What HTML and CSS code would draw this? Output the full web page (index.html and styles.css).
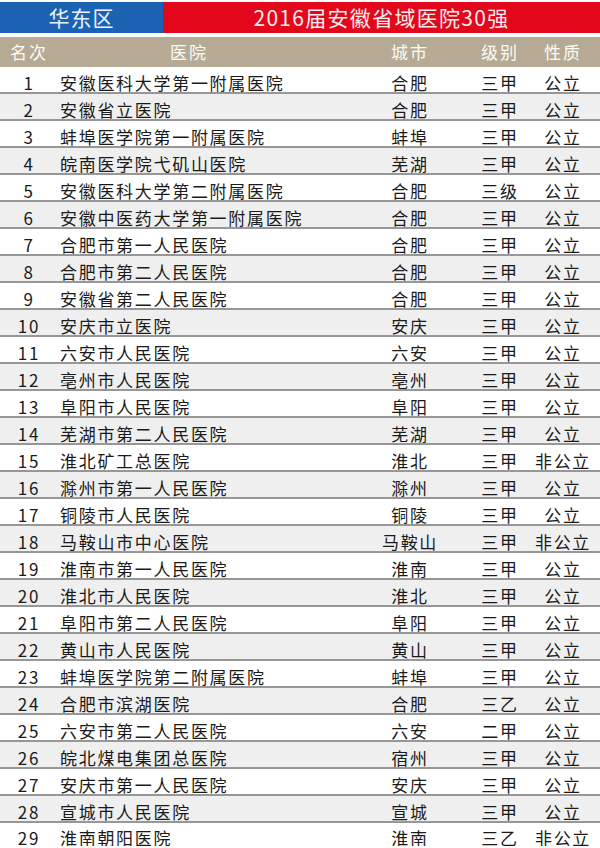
FILE: index.html
```html
<!DOCTYPE html>
<html lang="zh">
<head>
<meta charset="utf-8">
<title>2016届安徽省域医院30强</title>
<link rel="stylesheet" href="styles.css">
</head>
<body>
<div class="page">
  <div class="title">
    <div class="region">华东区</div>
    <div class="heading">2016届安徽省域医院30强</div>
  </div>
  <div class="row head">
    <div class="c rank">名次</div>
    <div class="c name hname">医院</div>
    <div class="c city">城市</div>
    <div class="c level">级别</div>
    <div class="c kind">性质</div>
  </div>
  <div class="row"><div class="c rank">1</div><div class="c name">安徽医科大学第一附属医院</div><div class="c city">合肥</div><div class="c level">三甲</div><div class="c kind">公立</div></div>
  <div class="row"><div class="c rank">2</div><div class="c name">安徽省立医院</div><div class="c city">合肥</div><div class="c level">三甲</div><div class="c kind">公立</div></div>
  <div class="row"><div class="c rank">3</div><div class="c name">蚌埠医学院第一附属医院</div><div class="c city">蚌埠</div><div class="c level">三甲</div><div class="c kind">公立</div></div>
  <div class="row"><div class="c rank">4</div><div class="c name">皖南医学院弋矶山医院</div><div class="c city">芜湖</div><div class="c level">三甲</div><div class="c kind">公立</div></div>
  <div class="row"><div class="c rank">5</div><div class="c name">安徽医科大学第二附属医院</div><div class="c city">合肥</div><div class="c level">三级</div><div class="c kind">公立</div></div>
  <div class="row"><div class="c rank">6</div><div class="c name">安徽中医药大学第一附属医院</div><div class="c city">合肥</div><div class="c level">三甲</div><div class="c kind">公立</div></div>
  <div class="row"><div class="c rank">7</div><div class="c name">合肥市第一人民医院</div><div class="c city">合肥</div><div class="c level">三甲</div><div class="c kind">公立</div></div>
  <div class="row"><div class="c rank">8</div><div class="c name">合肥市第二人民医院</div><div class="c city">合肥</div><div class="c level">三甲</div><div class="c kind">公立</div></div>
  <div class="row"><div class="c rank">9</div><div class="c name">安徽省第二人民医院</div><div class="c city">合肥</div><div class="c level">三甲</div><div class="c kind">公立</div></div>
  <div class="row"><div class="c rank">10</div><div class="c name">安庆市立医院</div><div class="c city">安庆</div><div class="c level">三甲</div><div class="c kind">公立</div></div>
  <div class="row"><div class="c rank">11</div><div class="c name">六安市人民医院</div><div class="c city">六安</div><div class="c level">三甲</div><div class="c kind">公立</div></div>
  <div class="row"><div class="c rank">12</div><div class="c name">亳州市人民医院</div><div class="c city">亳州</div><div class="c level">三甲</div><div class="c kind">公立</div></div>
  <div class="row"><div class="c rank">13</div><div class="c name">阜阳市人民医院</div><div class="c city">阜阳</div><div class="c level">三甲</div><div class="c kind">公立</div></div>
  <div class="row"><div class="c rank">14</div><div class="c name">芜湖市第二人民医院</div><div class="c city">芜湖</div><div class="c level">三甲</div><div class="c kind">公立</div></div>
  <div class="row"><div class="c rank">15</div><div class="c name">淮北矿工总医院</div><div class="c city">淮北</div><div class="c level">三甲</div><div class="c kind">非公立</div></div>
  <div class="row"><div class="c rank">16</div><div class="c name">滁州市第一人民医院</div><div class="c city">滁州</div><div class="c level">三甲</div><div class="c kind">公立</div></div>
  <div class="row"><div class="c rank">17</div><div class="c name">铜陵市人民医院</div><div class="c city">铜陵</div><div class="c level">三甲</div><div class="c kind">公立</div></div>
  <div class="row"><div class="c rank">18</div><div class="c name">马鞍山市中心医院</div><div class="c city">马鞍山</div><div class="c level">三甲</div><div class="c kind">非公立</div></div>
  <div class="row"><div class="c rank">19</div><div class="c name">淮南市第一人民医院</div><div class="c city">淮南</div><div class="c level">三甲</div><div class="c kind">公立</div></div>
  <div class="row"><div class="c rank">20</div><div class="c name">淮北市人民医院</div><div class="c city">淮北</div><div class="c level">三甲</div><div class="c kind">公立</div></div>
  <div class="row"><div class="c rank">21</div><div class="c name">阜阳市第二人民医院</div><div class="c city">阜阳</div><div class="c level">三甲</div><div class="c kind">公立</div></div>
  <div class="row"><div class="c rank">22</div><div class="c name">黄山市人民医院</div><div class="c city">黄山</div><div class="c level">三甲</div><div class="c kind">公立</div></div>
  <div class="row"><div class="c rank">23</div><div class="c name">蚌埠医学院第二附属医院</div><div class="c city">蚌埠</div><div class="c level">三甲</div><div class="c kind">公立</div></div>
  <div class="row"><div class="c rank">24</div><div class="c name">合肥市滨湖医院</div><div class="c city">合肥</div><div class="c level">三乙</div><div class="c kind">公立</div></div>
  <div class="row"><div class="c rank">25</div><div class="c name">六安市第二人民医院</div><div class="c city">六安</div><div class="c level">二甲</div><div class="c kind">公立</div></div>
  <div class="row"><div class="c rank">26</div><div class="c name">皖北煤电集团总医院</div><div class="c city">宿州</div><div class="c level">三甲</div><div class="c kind">公立</div></div>
  <div class="row"><div class="c rank">27</div><div class="c name">安庆市第一人民医院</div><div class="c city">安庆</div><div class="c level">三甲</div><div class="c kind">公立</div></div>
  <div class="row"><div class="c rank">28</div><div class="c name">宣城市人民医院</div><div class="c city">宣城</div><div class="c level">三甲</div><div class="c kind">公立</div></div>
  <div class="row last"><div class="c rank">29</div><div class="c name">淮南朝阳医院</div><div class="c city">淮南</div><div class="c level">三乙</div><div class="c kind">非公立</div></div>
</div>
</body>
</html>
```

FILE: styles.css
```css
html, body {
  margin: 0;
  padding: 0;
  background: #ffffff;
}

body {
  font-family: "Noto Sans CJK SC", "Noto Sans", sans-serif;
  color: #1a1a1a;
}

.page {
  width: 600px;
  padding-top: 2px;
  overflow: hidden;
}

.title {
  display: grid;
  grid-template-columns: 163px 1fr;
  height: 31px;
  margin-bottom: 4px;
  font-size: 21px;
  line-height: 31px;
}

.region {
  background: #1b62b3;
  color: #eef3fb;
  text-align: center;
  letter-spacing: 1px;
}

.heading {
  background: #e2071b;
  color: #fbecee;
  text-align: center;
  letter-spacing: 1.3px;
}

.row {
  display: grid;
  grid-template-columns: 58px 307px 90px 90px 36px 1fr;
  height: 27px;
  box-sizing: border-box;
  border-bottom: 2px solid #979797;
  padding-top: 6px;
  font-size: 17px;
  line-height: 19px;
  letter-spacing: 1.7px;
}

.row:nth-child(even) {
  background: #efefef;
}

.row.head {
  height: 30px;
  border-bottom: none;
  padding-top: 5px;
  background: #b6aa95;
  color: #fbfaf7;
  letter-spacing: 2px;
}

.row.last {
  height: 23px;
  border-bottom: none;
  padding-top: 6px;
  line-height: 17px;
}

.c {
  display: flex;
  justify-content: center;
  white-space: nowrap;
}

.c.name {
  justify-content: flex-start;
  padding-left: 2px;
}

.c.hname {
  padding-left: 112px;
}
```
